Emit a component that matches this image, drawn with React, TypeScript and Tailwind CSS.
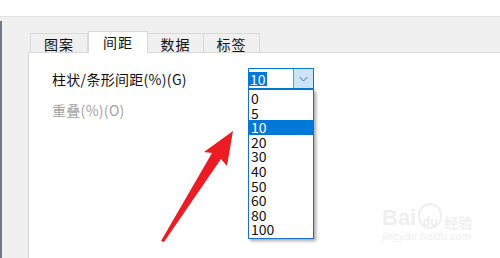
const tabs = [
  { label: "图案", w: "w-[58px]" },
  { label: "间距", w: "w-[60px]", active: true },
  { label: "数据", w: "w-[57px]" },
  { label: "标签", w: "w-[57px]" },
];

const options = ["0", "5", "10", "20", "30", "40", "50", "60", "80", "100"];

function Arrow() {
  return (
    <svg
      className="pointer-events-none absolute left-0 top-0"
      width="500"
      height="258"
      viewBox="0 0 500 258"
    >
      <polygon
        points="233,131 227,166 221,159 164,242 161,241 212,153 204,152"
        fill="#ec1c24"
      />
    </svg>
  );
}

function Watermark() {
  return (
    <div className="pointer-events-none absolute left-[382px] top-[203px] flex flex-col text-[#efefef]">
      <div className="flex items-end gap-[2px] leading-none">
        <span className="font-['Liberation_Sans',sans-serif] text-[22px] font-bold">Bai</span>
        <span className="flex h-[26px] w-[24px] items-end justify-center rounded-full border-2 border-[#efefef] text-[12px] font-bold">
          du
        </span>
        <span className="text-[14px] font-bold">经验</span>
      </div>
      <span className="mt-[2px] font-['Liberation_Sans',sans-serif] text-[11px] italic leading-none">
        jingyan.baidu.com
      </span>
    </div>
  );
}

export default function App() {
  return (
    <div className="relative h-[258px] w-[500px] overflow-hidden bg-white font-['Noto_Sans_CJK_SC',sans-serif]">
      <div className="h-4 bg-white" />
      <div className="flex h-[242px] border-t border-[#e4e4e4] bg-[#f0f0f0]">
        <div className="mt-[4px] w-[2px] bg-[#737a84]" />
        <div className="w-[26px]" />
        <div className="flex flex-1 flex-col">
          {/* tab strip */}
          <div className="flex h-[36px] items-end border-b border-[#d9d9d9] pl-[2px]">
            {tabs.map((t) =>
              t.active ? (
                <div
                  key={t.label}
                  className={`${t.w} relative z-10 mb-[-1px] flex h-[22px] items-center justify-center border-x border-t border-[#d9d9d9] bg-white pb-[2px] text-[14px] leading-none tracking-[1px] text-[#111]`}
                >
                  {t.label}
                </div>
              ) : (
                <div
                  key={t.label}
                  className={`${t.w} -ml-px flex h-[19px] items-center justify-center border-x border-t border-[#d9d9d9] bg-[#f0f0f0] pt-[1px] text-[14px] leading-none tracking-[1px] text-[#111] first:ml-0`}
                >
                  {t.label}
                </div>
              )
            )}
          </div>

          {/* panel */}
          <div className="flex-1 border-l border-[#d9d9d9] bg-white pl-[23px] pt-[15px]">
            <div className="flex h-[21px] items-center">
              <span className="w-[196px] text-[14px] leading-none tracking-[0.3px] text-[#111]">
                柱状/条形间距(%)(G)
              </span>
              <div className="relative flex h-[21px] w-[66px] border border-[#0078d7] bg-white">
                <div className="flex flex-1 items-center">
                  <span className="flex h-[14px] items-center bg-[#0078d7] px-[1px] text-[14px] leading-none text-white">
                    10
                  </span>
                </div>
                <div className="flex w-[20px] items-center justify-center border-l border-[#569de5] bg-[#cce4f7]">
                  <svg width="9" height="6" viewBox="0 0 9 6">
                    <polyline points="0.5,1 4.5,5 8.5,1" fill="none" stroke="#5a6a7a" strokeWidth="1" />
                  </svg>
                </div>

                {/* open dropdown list */}
                <div className="absolute left-[-1px] top-[20px] z-20 flex h-[150px] w-[66px] flex-col border border-[#1a6fc9] bg-white py-[1px] shadow-[2px_2px_3px_rgba(0,0,0,0.35)]">
                  {options.map((o) => (
                    <div
                      key={o}
                      className={`h-[14.6px] pl-[2px] text-[14px] leading-[14.6px] ${
                        o === "10" ? "bg-[#0078d7] text-white" : "text-[#111]"
                      }`}
                    >
                      {o}
                    </div>
                  ))}
                </div>
              </div>
            </div>
            <div className="mt-[11px] flex h-[20px] items-center text-[14px] leading-none tracking-[0.3px] text-[#a3a3a3]">
              重叠(%)(O)
            </div>
          </div>
        </div>
      </div>
      <Arrow />
      <Watermark />
    </div>
  );
}
